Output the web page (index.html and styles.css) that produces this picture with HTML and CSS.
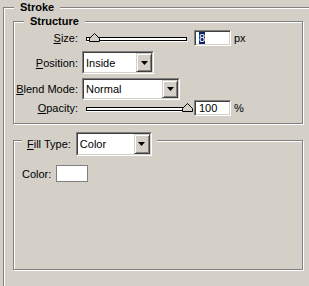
FILE: index.html
```html
<!DOCTYPE html>
<html lang="en">
<head>
    <meta charset="UTF-8">
    <title>Stroke</title>
    <link rel="stylesheet" href="styles.css">
</head>
<body>
    <div class="group stroke">
        <div class="group-title"><span>Stroke</span></div>

        <div class="group structure">
            <div class="group-title"><span>Structure</span></div>

            <div class="row row-size">
                <div class="label"><u>S</u>ize:</div>
                <svg class="slider" width="112" height="16" viewBox="0 0 112 16">
                    <rect x="4.5" y="7.5" width="100" height="3" fill="#fff" stroke="#000"/>
                    <line x1="4" y1="11.5" x2="106" y2="11.5" stroke="#fff"/>
                    <path d="M7.5 11.5 V8.5 L12.5 3.5 L17.5 8.5 V11.5 Z" fill="#d4d0c8" stroke="#000"/>
                </svg>
                <div class="textbox"><span class="selected">8</span></div>
                <div class="unit">px</div>
            </div>

            <div class="row row-position">
                <div class="label"><u>P</u>osition:</div>
                <div class="combo combo-position">
                    <div class="combo-inner">
                        <span class="combo-text">Inside</span>
                        <span class="combo-btn"><svg width="7" height="4" viewBox="0 0 7 4"><path d="M0 0 H7 L3.5 4 Z" fill="#000"/></svg></span>
                    </div>
                </div>
            </div>

            <div class="row row-blend">
                <div class="label"><u>B</u>lend Mode:</div>
                <div class="combo combo-blend">
                    <div class="combo-inner">
                        <span class="combo-text">Normal</span>
                        <span class="combo-btn"><svg width="7" height="4" viewBox="0 0 7 4"><path d="M0 0 H7 L3.5 4 Z" fill="#000"/></svg></span>
                    </div>
                </div>
            </div>

            <div class="row row-opacity">
                <div class="label"><u>O</u>pacity:</div>
                <svg class="slider" width="112" height="16" viewBox="0 0 112 16">
                    <rect x="4.5" y="7.5" width="100" height="3" fill="#fff" stroke="#000"/>
                    <line x1="4" y1="11.5" x2="106" y2="11.5" stroke="#fff"/>
                    <path d="M100.5 11.5 V8.5 L105.5 3.5 L110.5 8.5 V11.5 Z" fill="#d4d0c8" stroke="#000"/>
                </svg>
                <div class="textbox">100</div>
                <div class="unit">%</div>
            </div>
        </div>

        <div class="group fill">
            <div class="fill-title">
                <div class="fill-legend">
                    <span class="fill-label"><u>F</u>ill Type:</span>
                    <div class="combo combo-fill">
                        <div class="combo-inner">
                            <span class="combo-text">Color</span>
                            <span class="combo-btn"><svg width="7" height="4" viewBox="0 0 7 4"><path d="M0 0 H7 L3.5 4 Z" fill="#000"/></svg></span>
                        </div>
                    </div>
                </div>
            </div>

            <div class="color-row">
                <span>Color:</span>
                <div class="swatch"></div>
            </div>
        </div>
    </div>
</body>
</html>
```

FILE: styles.css
```css
body {
    margin: 0;
    height: 286px;
    overflow: hidden;
    background: #d4d0c8;
    font-family: "Liberation Sans", Arial, sans-serif;
    font-size: 11px;
    color: #000;
}
.group {
    box-sizing: border-box;
    border: 1px solid #808080;
    box-shadow: 1px 1px 0 #fff, inset 1px 1px 0 #fff;
}
.group-title {
    display: flex;
    line-height: 13px;
    font-weight: bold;
}
.group-title span {
    background: #d4d0c8;
    padding: 0 6px;
}
.stroke {
    margin: 7px 0 0 3px;
    width: 306px;
    height: 279px;
    border-right: 0;
    border-bottom: 0;
    box-shadow: inset 1px 1px 0 #fff;
}
.stroke > .group-title {
    margin: -7px 0 0 10px;
}
.structure {
    margin: 7px 0 0 9px;
    width: 290px;
    padding-bottom: 7px;
}
.structure > .group-title {
    margin: -7px 0 0 10px;
}
.row {
    display: flex;
    align-items: center;
}
.label {
    width: 64px;
    margin-right: 4px;
    text-align: right;
    flex: none;
}
.row-size {
    margin-top: 2px;
    height: 16px;
}
.row-position {
    margin-top: 5px;
    height: 23px;
}
.row-blend {
    margin-top: 4px;
    height: 22px;
}
.row-opacity {
    height: 16px;
}
.slider {
    display: block;
    flex: none;
}
.textbox {
    box-sizing: border-box;
    width: 37px;
    height: 16px;
    padding: 1px 0 1px 4px;
    line-height: 12px;
    border: 1px solid;
    border-color: #808080 #fff #fff #808080;
    box-shadow: inset 1px 1px 0 #404040, inset -1px -1px 0 #d4d0c8;
    background: #fff;
}
.selected {
    display: inline-block;
    height: 12px;
    background: #0a246a;
    color: #fff;
}
.unit {
    margin-left: 3px;
}
.combo {
    box-sizing: border-box;
    display: flex;
    border: 1px solid;
    border-color: #808080 #fff #fff #808080;
}
.combo-inner {
    flex: 1;
    display: flex;
    border: 1px solid;
    border-color: #404040 #d4d0c8 #d4d0c8 #404040;
    background: #fff;
}
.combo-text {
    flex: 1;
    align-self: center;
    padding-left: 2px;
}
.combo-btn {
    box-sizing: border-box;
    width: 16px;
    display: flex;
    align-items: center;
    justify-content: center;
    border: 1px solid;
    border-color: #d4d0c8 #404040 #404040 #d4d0c8;
    box-shadow: inset 1px 1px 0 #fff, inset -1px -1px 0 #808080;
    background: #d4d0c8;
}
.combo-btn svg {
    display: block;
}
.combo-position {
    width: 72px;
    height: 23px;
}
.combo-blend {
    width: 98px;
    height: 22px;
}
.combo-fill {
    width: 76px;
    height: 24px;
}
.fill {
    margin: 16px 0 0 9px;
    width: 290px;
    height: 130px;
}
.fill-title {
    display: flex;
    margin: -9px 0 0 8px;
}
.fill-legend {
    display: flex;
    align-items: center;
    gap: 5px;
    padding: 0 5px;
    background: #d4d0c8;
}
.color-row {
    display: flex;
    align-items: center;
    gap: 5px;
    margin: 9px 0 0 8px;
}
.swatch {
    box-sizing: border-box;
    width: 32px;
    height: 17px;
    border: 1px solid #808080;
    background: #fff;
}
```
